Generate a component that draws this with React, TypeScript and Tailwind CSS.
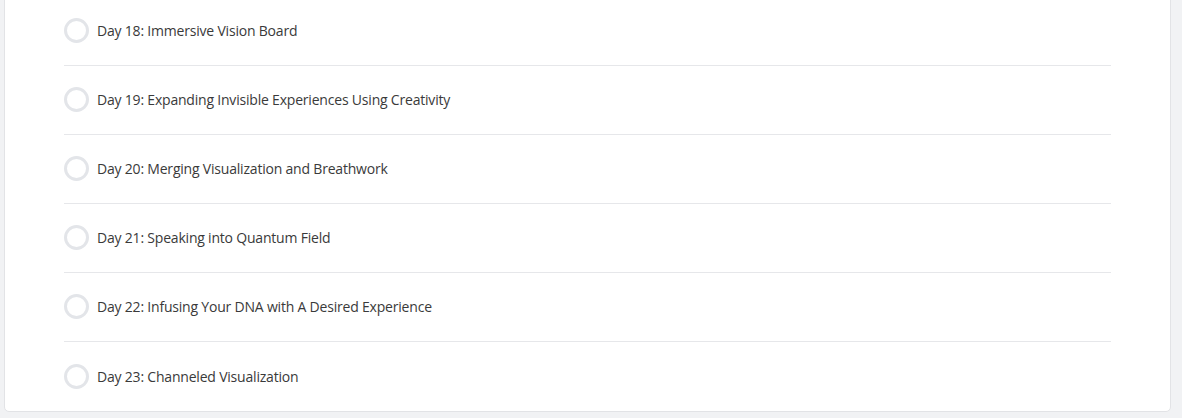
const lessons = [
  'Day 18: Immersive Vision Board',
  'Day 19: Expanding Invisible Experiences Using Creativity',
  'Day 20: Merging Visualization and Breathwork',
  'Day 21: Speaking into Quantum Field',
  'Day 22: Infusing Your DNA with A Desired Experience',
  'Day 23: Channeled Visualization',
];

export default function App() {
  return (
    <div className="w-[1182px] h-[418px] overflow-hidden bg-[#f1f2f4] px-[4px]" style={{ fontFamily: '"Open Sans", "Noto Sans", sans-serif' }}>
      {/* Lesson card, top cut off by the viewport */}
      <div className="-mt-[4px] w-[1167px] bg-white border border-[#e2e3e6] rounded-b-[5px] px-[59px]">
        {lessons.map((title, i) => (
          <div
            key={title}
            className={
              'flex items-center gap-[8px] h-[69px] pb-[1px] ' +
              (i < lessons.length - 1 ? 'border-b border-[#e6e7ea]' : '')
            }
          >
            <span className="w-[25px] h-[25px] rounded-full border-[3px] border-[#e3e5e9] bg-white flex-shrink-0" />
            <span className="text-[14px] text-[#3a3a3a] tracking-[-0.2px]">{title}</span>
          </div>
        ))}
      </div>
    </div>
  );
}
